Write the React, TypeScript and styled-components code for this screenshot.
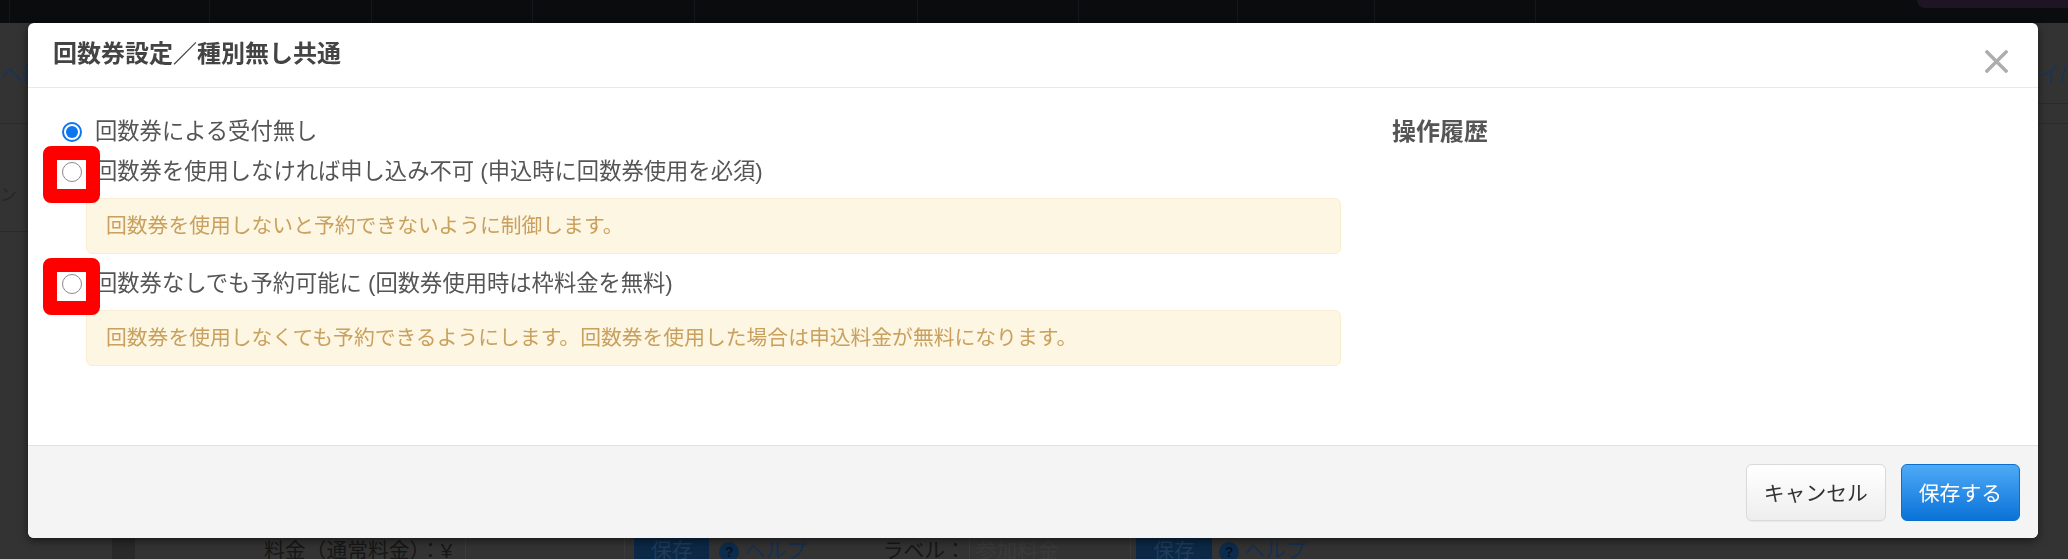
import { FC } from "react";
import styled, { createGlobalStyle } from "styled-components";

const GlobalStyle = createGlobalStyle`
  html, body {
    margin: 0;
    padding: 0;
  }
  body {
    width: 2068px;
    height: 559px;
    overflow: hidden;
    background: #333;
    font-family: "Liberation Sans", "Noto Sans CJK JP", sans-serif;
  }
  * { box-sizing: border-box; }
`;

/* ---------- dimmed page behind the dialog ---------- */

const BgPage = styled.div`
  width: 2068px;
  height: 559px;
  display: grid;
  grid-template-rows: 23px 1fr 21px;
  background: #333;
  overflow: hidden;
`;

const NavStrip = styled.div`
  display: flex;
  background: #0b0c0e;
`;

const NavCell = styled.div<{ $w: number }>`
  flex: none;
  width: ${p => p.$w}px;
  border-right: 1px solid #16171a;
`;

const NavPill = styled.div`
  margin-left: auto;
  width: 151px;
  height: 8px;
  background: #1f1424;
  border-radius: 0 0 0 10px;
`;

const BgMiddle = styled.div`
  display: grid;
  grid-template-columns: 28px 1fr 30px;
`;

const Gutter = styled.div`
  display: flex;
  flex-direction: column;
  overflow: hidden;
`;

const GutterText = styled.div<{ $top: number; $color: string; $size: number }>`
  margin-top: ${p => p.$top}px;
  height: 28px;
  line-height: 28px;
  font-size: ${p => p.$size}px;
  color: ${p => p.$color};
  white-space: nowrap;
`;

const GutterLine = styled.div<{ $top: number }>`
  margin-top: ${p => p.$top}px;
  border-top: 1px solid #2a2a2a;
`;

const BgBottom = styled.div`
  display: flex;
  align-items: stretch;
  overflow: hidden;
  font-size: 20.8px;
  line-height: 30px;
  white-space: nowrap;
`;

const BgItem = styled.div<{ $ml: number; $w?: number; $color?: string; $bg?: string; $line?: boolean }>`
  flex: none;
  margin-left: ${p => p.$ml}px;
  ${p => (p.$w ? `width: ${p.$w}px;` : "")}
  color: ${p => p.$color ?? "#171717"};
  background: ${p => p.$bg ?? "transparent"};
  ${p => (p.$line ? "border-left: 1px solid #3b3b3b;" : "")}
  display: flex;
  align-items: flex-start;
  justify-content: ${p => (p.$bg ? "center" : "flex-start")};
  margin-top: -2px;
  gap: 5px;
`;

const HelpDot = styled.span`
  width: 20px;
  height: 20px;
  margin-top: 6px;
  border-radius: 50%;
  background: #0d2c4c;
  color: #061525;
  font-size: 14px;
  line-height: 20px;
  text-align: center;
  font-weight: 700;
`;

/* ---------- dialog ---------- */

const Overlay = styled.div`
  position: fixed;
  inset: 0;
  padding: 23px 30px 0 28px;
  display: flex;
  align-items: flex-start;
`;

const Modal = styled.div`
  width: 2010px;
  background: #fff;
  border-radius: 6px;
  box-shadow: 0 3px 9px rgba(0, 0, 0, 0.5);
  overflow: hidden;
`;

const Header = styled.div`
  height: 65px;
  display: flex;
  align-items: center;
  justify-content: space-between;
  padding: 0 30px 0 25px;
  border-bottom: 1px solid #e9e9e9;
`;

const Title = styled.h4`
  margin: 0;
  font-size: 24px;
  line-height: 30px;
  font-weight: 700;
  color: #444;
  margin-top: -3px;
`;

const CloseButton = styled.button`
  border: 0;
  padding: 0;
  background: none;
  width: 23px;
  height: 23px;
  margin-top: 12px;
  display: flex;
  cursor: pointer;
`;

const Body = styled.div`
  height: 357px;
  display: grid;
  grid-template-columns: 1340px 1fr;
  padding-top: 24px;
`;

const MainCol = styled.div`
  padding: 0 27px 0 34px;
`;

const SideCol = styled.div`
  padding-left: 24px;
`;

const SideTitle = styled.h4`
  margin: 0;
  font-size: 24px;
  line-height: 40px;
  font-weight: 700;
  color: #555;
`;

const RadioRow = styled.label`
  display: flex;
  align-items: center;
  gap: 13px;
  height: 40px;
  cursor: pointer;
`;

const RadioSlot = styled.span`
  position: relative;
  width: 20px;
  height: 20px;
  flex: none;
`;

const Highlight = styled.span`
  position: absolute;
  left: -19px;
  top: -16px;
  width: 57px;
  height: 57px;
  border: 14px solid #ff0000;
  border-radius: 8px;
  background: #fff;
`;

const RadioCircle = styled.span<{ $checked?: boolean }>`
  position: absolute;
  inset: 0;
  border-radius: 50%;
  border: ${p => (p.$checked ? "2px solid #0b76ef" : "1.5px solid #8a8a8a")};
  background: #fff;
  &::after {
    content: "";
    position: absolute;
    inset: 2px;
    border-radius: 50%;
    background: ${p => (p.$checked ? "#0b76ef" : "transparent")};
  }
`;

const Label = styled.span`
  font-size: 22.3px;
  line-height: 40px;
  color: #555;
  white-space: nowrap;
`;

const Alert = styled.div`
  margin: 6px 0 10px 24px;
  padding: 13px 19px;
  font-size: 20.8px;
  line-height: 28px;
  color: #c9a05e;
  background: #fcf6e2;
  border: 1px solid #f9eed0;
  border-radius: 6px;
`;

const Footer = styled.div`
  height: 93px;
  display: flex;
  align-items: center;
  justify-content: flex-end;
  gap: 15px;
  padding: 0 18px 0 0;
  background: #f4f4f4;
  border-top: 1px solid #e2e2e2;
`;

const Button = styled.button<{ $primary?: boolean }>`
  height: 57px;
  padding: 0 17px;
  border-radius: 6px;
  font-family: inherit;
  font-size: 20.8px;
  cursor: pointer;
  color: ${p => (p.$primary ? "#fff" : "#333")};
  background: ${p =>
    p.$primary
      ? "linear-gradient(to bottom, #4eaaf6, #0a72d8)"
      : "linear-gradient(to bottom, #ffffff, #eeeeee)"};
  border: 1px solid ${p => (p.$primary ? "#0b6fce" : "#dadada")};
  box-shadow: ${p => (p.$primary ? "none" : "0 1px 1px rgba(0,0,0,0.05)")};
`;

const navWidths = [10, 200, 162, 161, 162, 223, 161, 159, 137, 161];

const Radio: FC<{ checked?: boolean; marked?: boolean }> = ({ checked, marked }) => (
  <RadioSlot>
    {marked && <Highlight />}
    <RadioCircle $checked={checked} />
  </RadioSlot>
);

export default function App() {
  return (
    <>
      <GlobalStyle />
      <BgPage>
        <NavStrip>
          {navWidths.map((w, i) => (
            <NavCell key={i} $w={w} />
          ))}
          <NavPill />
        </NavStrip>
        <BgMiddle>
          <Gutter>
            <GutterText $top={38} $color="#1c3352" $size={22}>へ編集</GutterText>
            <GutterLine $top={34} />
            <GutterText $top={58} $color="#262626" $size={17}>ン</GutterText>
            <GutterLine $top={21} />
          </Gutter>
          <div />
          <Gutter>
            <GutterText $top={38} $color="#1c3352" $size={22}>イ/</GutterText>
            <GutterLine $top={14} />
            <GutterLine $top={19} />
          </Gutter>
        </BgMiddle>
        <BgBottom>
          <BgItem $ml={112} $w={23} $bg="#292929" />
          <BgItem $ml={129}>料金（通常料金）：¥</BgItem>
          <BgItem $ml={13} $w={159} $line />
          <BgItem $ml={0} $w={10} $line />
          <BgItem $ml={0} $w={75} $bg="#0b2946" $color="#1f3b5a">保存</BgItem>
          <BgItem $ml={10} $color="#17304f"><HelpDot>?</HelpDot>ヘルプ</BgItem>
          <BgItem $ml={76}>ラベル：</BgItem>
          <BgItem $ml={3} $w={161} $line $color="#3a3a3a">&nbsp;参加料金</BgItem>
          <BgItem $ml={0} $w={6} $line />
          <BgItem $ml={0} $w={76} $bg="#0b2946" $color="#1f3b5a">保存</BgItem>
          <BgItem $ml={7} $color="#17304f"><HelpDot>?</HelpDot>ヘルプ</BgItem>
        </BgBottom>
      </BgPage>

      <Overlay>
        <Modal>
          <Header>
            <Title>回数券設定／種別無し共通</Title>
            <CloseButton aria-label="close">
              <svg width="23" height="23" viewBox="0 0 23 23">
                <path d="M2 2 L21 21 M21 2 L2 21" stroke="#adadad" strokeWidth="3.4" strokeLinecap="square" />
              </svg>
            </CloseButton>
          </Header>
          <Body>
            <MainCol>
              <RadioRow>
                <Radio checked />
                <Label>回数券による受付無し</Label>
              </RadioRow>
              <RadioRow>
                <Radio marked />
                <Label>回数券を使用しなければ申し込み不可 (申込時に回数券使用を必須)</Label>
              </RadioRow>
              <Alert>回数券を使用しないと予約できないように制御します。</Alert>
              <RadioRow>
                <Radio marked />
                <Label>回数券なしでも予約可能に (回数券使用時は枠料金を無料)</Label>
              </RadioRow>
              <Alert>回数券を使用しなくても予約できるようにします。回数券を使用した場合は申込料金が無料になります。</Alert>
            </MainCol>
            <SideCol>
              <SideTitle>操作履歴</SideTitle>
            </SideCol>
          </Body>
          <Footer>
            <Button>キャンセル</Button>
            <Button $primary>保存する</Button>
          </Footer>
        </Modal>
      </Overlay>
    </>
  );
}
